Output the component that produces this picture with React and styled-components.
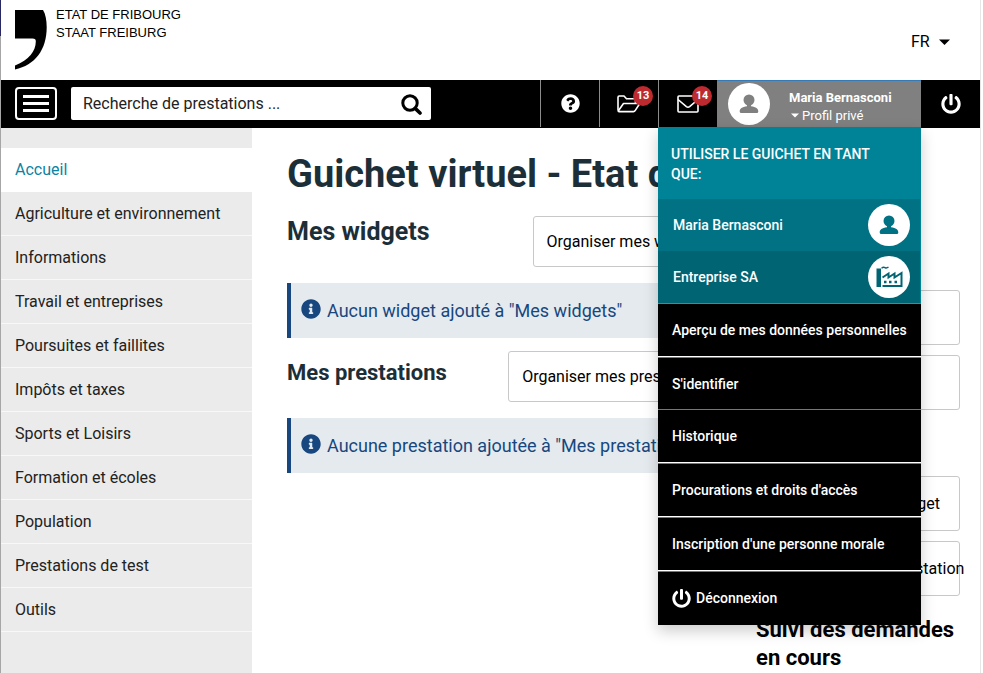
import React from "react";
import styled, { createGlobalStyle } from "styled-components";
import { FaInfoCircle, FaPowerOff, FaQuestionCircle } from "react-icons/fa";

const GlobalStyle = createGlobalStyle`
  *, *::before, *::after { box-sizing: border-box; }
  body {
    margin: 0;
    overflow: hidden;
    background: #fff;
    font-family: Roboto, "Liberation Sans", sans-serif;
    font-size: 16px;
    line-height: 20px;
    color: #222;
  }
  button, input, select { font: inherit; color: inherit; }
  h1, h2, ul, p { margin: 0; padding: 0; }
  ul { list-style: none; }
  a { color: inherit; text-decoration: none; }
`;

const Window = styled.div`
  padding: 0 2px 0 1px;
  background: linear-gradient(#2a2862 36px, #a6a6a6 36px) left / 1px 100% no-repeat;
`;

const Page = styled.div`
  display: flex;
  flex-direction: column;
  min-height: 100vh;
  border-right: 1px solid #e6e6e6;
  background: #fff;
`;

const Header = styled.header`
  display: flex;
  justify-content: space-between;
  align-items: flex-start;
  height: 80px;
  padding: 6px 30px 0 14px;
`;

const Brand = styled.a`
  display: flex;
  gap: 9px;
  color: #000;
  font-family: "Liberation Sans", Arial, sans-serif;
  font-size: 13px;
  line-height: 18px;
  svg { margin-top: 4px; }
`;

const Language = styled.label`
  display: flex;
  align-items: center;
  gap: 8px;
  margin-top: 26px;
  color: #000;
`;

const LanguageSelect = styled.select`
  appearance: none;
  padding: 0;
  border: 0;
  background: none;
`;

const NavBar = styled.nav`
  display: flex;
  height: 48px;
  padding-left: 14px;
  background: #000;
  color: #fff;
`;

const MenuButton = styled.button`
  display: grid;
  place-items: center;
  width: 42px;
  height: 33px;
  margin-top: 7px;
  padding: 0;
  border: 2px solid #fff;
  border-radius: 4px;
  background: #000;
`;

const SearchForm = styled.form`
  display: flex;
  flex: 0 1 360px;
  height: 33px;
  margin: 7px auto 0 14px;
  border-radius: 2px;
  background: #fff;
`;

const SearchInput = styled.input`
  flex: 1;
  min-width: 0;
  padding: 0 12px;
  border: 0;
  background: none;
  color: #222;
  &::placeholder { color: #222; opacity: 1; }
`;

const SearchButton = styled.button`
  display: grid;
  place-items: center;
  width: 40px;
  padding: 2px 0 0;
  border: 0;
  background: none;
  color: #000;
`;

const NavCell = styled.a`
  position: relative;
  display: grid;
  place-items: center;
  width: 59px;
  height: 47px;
  border-left: 1px solid ${(p) => (p.$plain ? "#000" : "#8c8c8c")};
`;

const Badge = styled.span`
  position: absolute;
  top: 6px;
  right: 5px;
  width: 20px;
  height: 20px;
  border-radius: 50%;
  background: #bd2a30;
  font-size: 11px;
  font-weight: 700;
  text-align: center;
`;

const Profile = styled.div`
  position: relative;
  height: 47px;
`;

const ProfileButton = styled.button`
  display: flex;
  align-items: center;
  gap: 19px;
  width: 204px;
  height: 47px;
  padding: 0 0 0 11px;
  border: 0;
  border-top: 1px solid #337ab7;
  background: #808080;
  color: #fff;
  font-size: 13px;
  line-height: 18px;
  text-align: left;
`;

const ProfileText = styled.span`
  padding-top: 5px;
`;

const Avatar = styled.span`
  display: grid;
  place-items: center;
  width: 42px;
  height: 42px;
  border-radius: 50%;
  background: #fff;
  color: ${(p) => p.$color};
`;

const ProfileKind = styled.span`
  display: flex;
  align-items: center;
  gap: 3px;
  padding-left: 2px;
`;

const Dropdown = styled.div`
  position: absolute;
  z-index: 2;
  top: 47px;
  right: 0;
  width: 263px;
  background: #000;
  box-shadow: 0 6px 14px rgba(0, 0, 0, 0.2);
  font-size: 14px;
  font-weight: 500;
`;

const DropdownTitle = styled.p`
  height: 72px;
  padding: 17px 30px 0 13px;
  background: #008297;
`;

const Identity = styled.a`
  display: flex;
  align-items: center;
  justify-content: space-between;
  height: 52px;
  padding: 0 10px 0 15px;
  border-right: 1px solid #008297;
  background: ${(p) => p.$tone};
`;

const MenuLink = styled.a`
  display: flex;
  align-items: center;
  gap: 5px;
  height: ${(p) => (p.$tight ? 52 : 54)}px;
  padding: 0 14px;
  border-top: 1px solid #777;
  border-bottom: ${(p) => (p.$tight ? 0 : 1)}px solid ${(p) => (p.$last ? "#000" : "#fff")};
`;

const Body = styled.div`
  display: flex;
  flex: 1;
`;

const Sidebar = styled.aside`
  flex: 0 0 251px;
  padding-top: 20px;
  background: #ebebeb;
`;

const SideLink = styled.a`
  display: flex;
  align-items: center;
  height: 44px;
  padding: 0 14px;
  border-bottom: 1px solid ${(p) => (p.$active ? "#fff" : "#f8f8f8")};
  background: ${(p) => (p.$active ? "#fff" : "none")};
  color: ${(p) => (p.$active ? "#0b83a3" : "#222")};
`;

const Content = styled.main`
  flex: 1;
  display: grid;
  grid-template-columns: 1fr 204px;
  column-gap: 32px;
  align-content: start;
  padding: 22px 20px 0 35px;
`;

const PageTitle = styled.h1`
  grid-column: 1 / -1;
  height: 66px;
  font-size: 38px;
  line-height: 48px;
  color: #1c2f38;
  white-space: nowrap;
`;

const Section = styled.section`
  margin-bottom: 13px;
`;

const SectionHead = styled.div`
  display: flex;
  justify-content: space-between;
  align-items: flex-start;
  margin-bottom: 16px;
`;

const SectionTitle = styled.h2`
  padding-top: ${(p) => (p.$large ? 2 : 8)}px;
  font-size: ${(p) => (p.$large ? 25 : 22)}px;
  line-height: 28px;
  color: #1c2f38;
`;

const OutlineButton = styled.button`
  height: ${(p) => (p.$wide ? 55 : 51)}px;
  width: ${(p) => (p.$wide ? "100%" : "auto")};
  padding: 0 ${(p) => (p.$wide ? 0 : 13)}px 0 ${(p) => (p.$wide ? 22 : 13)}px;
  border: 1px solid #c8c8c8;
  border-radius: 3px;
  background: #fff;
  color: #000;
  text-align: left;
  white-space: nowrap;
`;

const Notice = styled.p`
  display: flex;
  align-items: center;
  gap: 6px;
  height: 55px;
  padding-left: 10px;
  border-left: 4px solid #17477e;
  background: #e5eaee;
  color: #17477e;
  font-size: 18px;
  white-space: nowrap;
  overflow: hidden;
  svg { flex: none; margin-bottom: 4px; }
`;

const Tools = styled.aside`
  display: flex;
  flex-direction: column;
  gap: 66px;
  padding-top: 74px;
`;

const ToolGroup = styled.div`
  display: flex;
  flex-direction: column;
  gap: 10px;
`;

const FollowTitle = styled.h2`
  margin-top: -46px;
  font-size: 22px;
  line-height: 28px;
  color: #000;
`;

const Caret = ({ width = 11 }) => (
  <svg width={width} height={width / 2 + 1} viewBox="0 0 12 7" fill="currentColor" aria-hidden="true">
    <path d="M0 0.5H12L6 6.5Z" />
  </svg>
);

const CommaLogo = () => (
  <svg width="32" height="60" viewBox="0 0 32 60" aria-hidden="true">
    <path d="M0 0H28C30.5 4 31.7 10 31.7 17C31.7 40 20 55 0 59.5V55.5C14 50 20.8 41 20.8 31.5C20.8 29.3 20 28.5 17.5 28.5H0Z" />
  </svg>
);

const Bars = () => (
  <svg width="26" height="17" viewBox="0 0 26 17" stroke="#fff" strokeWidth="3" aria-hidden="true">
    <path d="M0 1.5H26M0 8.5H26M0 15.5H26" />
  </svg>
);

const SearchIcon = () => (
  <svg width="21" height="21" viewBox="0 0 21 21" fill="none" stroke="currentColor" aria-hidden="true">
    <circle cx="9" cy="9" r="7.2" strokeWidth="3" />
    <path d="M14.2 14.4L19 19" strokeWidth="3.6" strokeLinecap="round" />
  </svg>
);

const FolderIcon = () => (
  <svg width="24" height="18" viewBox="0 0 24 18" fill="none" stroke="currentColor" strokeWidth="1.6" strokeLinejoin="round" aria-hidden="true">
    <path d="M1 15.5V2.2Q1 1 2.2 1H7L9.5 3.8H17Q18.5 3.8 18.5 5.2V8" />
    <path d="M1.2 16L6.5 8.5H22.8L18.3 15.4Q17.6 16.6 16.4 16.6H2Q1.2 16.6 1.2 16Z" />
  </svg>
);

const MailIcon = () => (
  <svg width="22" height="18" viewBox="0 0 22 18" fill="none" stroke="currentColor" strokeWidth="1.6" strokeLinejoin="round" aria-hidden="true">
    <rect x="1" y="1" width="20" height="16" rx="1" />
    <path d="M1 4.5L9.4 11.6Q11 12.8 12.6 11.6L21 4.5" />
  </svg>
);

const UserIcon = () => (
  <svg width="20" height="20" viewBox="0 0 20 20" fill="currentColor" aria-hidden="true">
    <circle cx="10" cy="6" r="5.5" />
    <path d="M8 10H12V12.2C17 13 19.3 14.6 19.3 17.5Q19.3 19 17.8 19H2.2Q0.7 19 0.7 17.5C0.7 14.6 3 13 8 12.2Z" />
  </svg>
);

const FactoryIcon = () => (
  <svg width="27" height="22" viewBox="0 0 27 22" fill="none" stroke="currentColor" aria-hidden="true">
    <path d="M0.5 2.5H5V21H0.5Z" fill="currentColor" stroke="none" />
    <path d="M5.5 2.2Q7.5 0.6 9 1.6T12.5 1" strokeWidth="1.4" />
    <path d="M6.5 11.5L12.5 7.5V11.5L18.5 7.5V11.5L25.5 7V20H6.5" strokeWidth="2" />
    <path d="M8 16H10.5M13 16H15.5M18.5 16H21" strokeWidth="2.6" />
  </svg>
);

const sideItems = [
  "Accueil",
  "Agriculture et environnement",
  "Informations",
  "Travail et entreprises",
  "Poursuites et faillites",
  "Impôts et taxes",
  "Sports et Loisirs",
  "Formation et écoles",
  "Population",
  "Prestations de test",
  "Outils",
];

const menuItems = [
  "Aperçu de mes données personnelles",
  "S'identifier",
  "Historique",
  "Procurations et droits d'accès",
  "Inscription d'une personne morale",
];

const sections = [
  { title: "Mes widgets", large: true, action: "Organiser mes widgets", notice: 'Aucun widget ajouté à "Mes widgets"' },
  { title: "Mes prestations", large: false, action: "Organiser mes prestations", notice: 'Aucune prestation ajoutée à "Mes prestations"' },
];

const toolGroups = [
  ["Widgets", "Prestations"],
  ["Ajouter comme widget", "Ajouter comme prestation"],
];

export default function App() {
  return (
    <Window>
      <GlobalStyle />
      <Page>
        <Header>
          <Brand href="#">
            <CommaLogo />
            <span>ETAT DE FRIBOURG<br />STAAT FREIBURG</span>
          </Brand>
          <Language>
            <LanguageSelect aria-label="Langue" defaultValue="FR">
              <option>FR</option>
              <option>DE</option>
            </LanguageSelect>
            <Caret />
          </Language>
        </Header>

        <NavBar>
          <MenuButton aria-label="Menu"><Bars /></MenuButton>
          <SearchForm role="search">
            <SearchInput aria-label="Recherche de prestations" placeholder="Recherche de prestations ..." />
            <SearchButton type="button" aria-label="Rechercher"><SearchIcon /></SearchButton>
          </SearchForm>
          <NavCell href="#" aria-label="Aide"><FaQuestionCircle size={19} /></NavCell>
          <NavCell href="#" aria-label="Dossiers"><FolderIcon /><Badge>13</Badge></NavCell>
          <NavCell href="#" aria-label="Messages"><MailIcon /><Badge>14</Badge></NavCell>
          <Profile>
            <ProfileButton aria-expanded="true">
              <Avatar $color="#808080"><UserIcon /></Avatar>
              <ProfileText>
                <strong>Maria Bernasconi</strong>
                <ProfileKind><Caret width={8} />Profil privé</ProfileKind>
              </ProfileText>
            </ProfileButton>
            <Dropdown>
              <DropdownTitle>UTILISER LE GUICHET EN TANT QUE:</DropdownTitle>
              <Identity href="#" $tone="#007284">
                Maria Bernasconi
                <Avatar $color="#007284"><UserIcon /></Avatar>
              </Identity>
              <Identity href="#" $tone="#006473">
                Entreprise SA
                <Avatar $color="#006473"><FactoryIcon /></Avatar>
              </Identity>
              {menuItems.map((label, i) => (
                <MenuLink href="#" key={label} $tight={i === 1}>{label}</MenuLink>
              ))}
              <MenuLink href="#" $last><FaPowerOff size={19} />Déconnexion</MenuLink>
            </Dropdown>
          </Profile>
          <NavCell href="#" $plain aria-label="Se déconnecter"><FaPowerOff size={20} /></NavCell>
        </NavBar>

        <Body>
          <Sidebar>
            <ul>
              {sideItems.map((label, i) => (
                <li key={label}><SideLink href="#" $active={i === 0}>{label}</SideLink></li>
              ))}
            </ul>
          </Sidebar>
          <Content>
            <PageTitle>Guichet virtuel - Etat de Fribourg</PageTitle>
            <div>
              {sections.map((s) => (
                <Section key={s.title}>
                  <SectionHead>
                    <SectionTitle $large={s.large}>{s.title}</SectionTitle>
                    <OutlineButton>{s.action}</OutlineButton>
                  </SectionHead>
                  <Notice><FaInfoCircle size={20} />{s.notice}</Notice>
                </Section>
              ))}
            </div>
            <Tools>
              {toolGroups.map((group) => (
                <ToolGroup key={group[0]}>
                  {group.map((label) => <OutlineButton $wide key={label}>{label}</OutlineButton>)}
                </ToolGroup>
              ))}
              <FollowTitle>Suivi des demandes en cours</FollowTitle>
            </Tools>
          </Content>
        </Body>
      </Page>
    </Window>
  );
}
